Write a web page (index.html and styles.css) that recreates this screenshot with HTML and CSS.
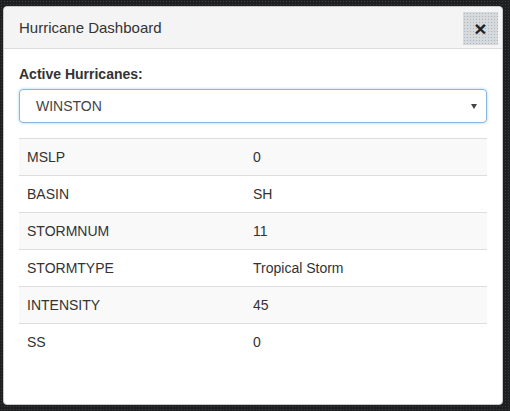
FILE: index.html
```html
<!DOCTYPE html>
<html>
<head>
<meta charset="utf-8">
<link rel="stylesheet" href="styles.css">
</head>
<body>
<div class="modal">
  <div class="modal-header">
    <h4 class="modal-title">Hurricane Dashboard</h4>
    <button class="close" type="button">&times;</button>
  </div>
  <div class="modal-body">
    <div class="form-group">
      <label class="label">Active Hurricanes:</label>
      <div class="select">
        <span class="select-value">WINSTON</span>
        <span class="caret"></span>
      </div>
    </div>
    <table class="table">
      <tr class="striped"><td class="key">MSLP</td><td>0</td></tr>
      <tr><td class="key">BASIN</td><td>SH</td></tr>
      <tr class="striped"><td class="key">STORMNUM</td><td>11</td></tr>
      <tr><td class="key">STORMTYPE</td><td>Tropical Storm</td></tr>
      <tr class="striped"><td class="key">INTENSITY</td><td>45</td></tr>
      <tr><td class="key">SS</td><td>0</td></tr>
    </table>
  </div>
</div>
</body>
</html>
```
FILE: styles.css
```css
html, body {
  margin: 0;
  padding: 0;
}
body {
  width: 510px;
  height: 411px;
  overflow: hidden;
  background-color: #1e1f20;
  background-image: radial-gradient(#3a3b3c 0.6px, transparent 0.8px);
  background-size: 3px 3px;
  font-family: "Liberation Sans", Arial, sans-serif;
  font-size: 14px;
  line-height: 20px;
  color: #333;
  padding-top: 6px;
  padding-left: 3px;
  box-sizing: border-box;
}
.modal {
  width: 500px;
  height: 399px;
  background: #fff;
  border: 1px solid #c8c8c8;
  border-radius: 4px;
  box-sizing: border-box;
  display: flex;
  flex-direction: column;
  overflow: hidden;
}
.modal-header {
  display: flex;
  align-items: center;
  justify-content: space-between;
  height: 42px;
  box-sizing: border-box;
  background: #f4f4f4;
  border-bottom: 1px solid #dcdcdc;
  padding: 1px 4px 0 15px;
}
.modal-title {
  margin: 0;
  font-size: 15px;
  font-weight: normal;
  color: #333;
  line-height: 20px;
}
.close {
  width: 35px;
  height: 33px;
  border: none;
  margin: 0;
  padding: 0;
  background-color: #d6dadd;
  background-image: radial-gradient(#a9b4bd 0.6px, transparent 0.9px);
  background-size: 3px 3px;
  font-family: "Liberation Sans", Arial, sans-serif;
  font-size: 21px;
  font-weight: bold;
  line-height: 33px;
  color: #222;
  text-align: center;
}
.modal-body {
  padding: 15px 15px 0 15px;
}
.form-group {
  margin-bottom: 15px;
}
.label {
  display: block;
  font-weight: bold;
  margin-bottom: 5px;
}
.select {
  height: 34px;
  box-sizing: border-box;
  border: 1px solid #86b6df;
  border-radius: 4px;
  box-shadow: 0 0 3px rgba(102, 175, 233, 0.6);
  display: flex;
  align-items: center;
  justify-content: space-between;
  padding: 0 9px 0 16px;
}
.select-value {
  color: #444;
}
.caret {
  width: 0;
  height: 0;
  border-left: 3px solid transparent;
  border-right: 3px solid transparent;
  border-top: 5px solid #444;
}
.table {
  width: 100%;
  border-collapse: collapse;
  border-spacing: 0;
}
.table td {
  padding: 8px;
  border-top: 1px solid #ddd;
  line-height: 20px;
  vertical-align: top;
}
.table td.key {
  width: 210px;
}
.striped td {
  background: #f9f9f9;
}
```
